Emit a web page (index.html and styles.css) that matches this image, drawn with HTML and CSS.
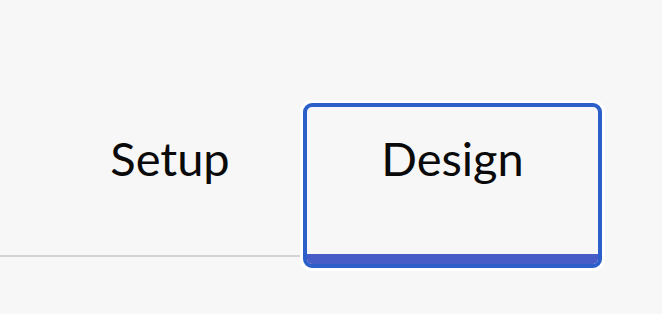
FILE: index.html
```html
<!DOCTYPE html>
<html lang="en">
<head>
<meta charset="utf-8">
<title>Tabs</title>
<link rel="stylesheet" href="styles.css">
</head>
<body>
  <div class="tabs">
    <div class="tab tab-setup">Setup</div>
    <div class="tab tab-design">
      <span class="tab-label">Design</span>
      <span class="tab-bar"></span>
    </div>
  </div>
</body>
</html>
```

FILE: styles.css
```css
html, body {
  margin: 0;
  padding: 0;
  background: #f7f7f7;
}
body {
  width: 662px;
  height: 314px;
  overflow: hidden;
  font-family: Lato, "Open Sans", sans-serif;
  font-weight: 400;
  color: #0a0a0a;
}
.tabs {
  display: flex;
  align-items: flex-start;
  padding-top: 103px;
}
.tab {
  font-size: 47px;
  line-height: 56px;
  box-sizing: border-box;
}
.tab-setup {
  width: 300px;
  height: 154px;
  padding-left: 40px;
  padding-top: 27px;
  text-align: center;
  border-bottom: 2px solid #d4d4d4;
}
.tab-design {
  width: 299px;
  height: 165px;
  margin-left: 3px;
  border: 4px solid #2c5fc9;
  border-radius: 9px;
  box-shadow: 0 0 0 3px #ffffff;
  display: flex;
  flex-direction: column;
  align-items: center;
  overflow: hidden;
}
.tab-label {
  padding-top: 23px;
  flex: 1;
}
.tab-bar {
  align-self: stretch;
  height: 10px;
  background: #475cc6;
}
```
